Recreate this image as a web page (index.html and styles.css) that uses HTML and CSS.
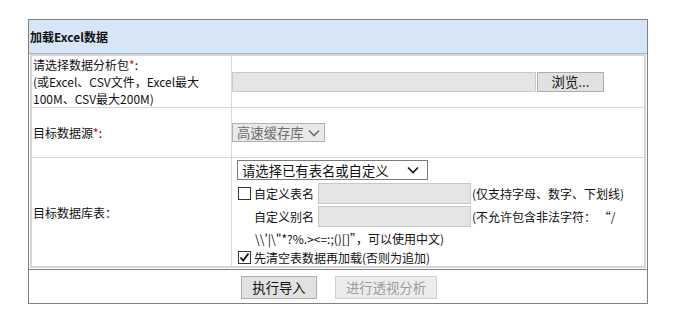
FILE: index.html
```html
<!DOCTYPE html>
<html lang="zh-CN">
<head>
  <meta charset="UTF-8">
  <title>加载Excel数据</title>
  <link rel="stylesheet" href="styles.css">
</head>
<body>
  <div class="panel">
    <div class="panel-title">加载Excel数据</div>

    <div class="form">
      <!-- 数据文件 -->
      <div class="row row-file">
        <div class="label">
          <span>请选择数据分析包<em>*</em>:<br>(或Excel、CSV文件，Excel最大<br>100M、CSV最大200M)</span>
        </div>
        <div class="field">
          <div class="file">
            <span class="file-path"></span>
            <span class="btn btn-browse">浏览...</span>
          </div>
        </div>
      </div>

      <!-- 目标数据源 -->
      <div class="row row-source">
        <div class="label"><span>目标数据源<em>*</em>:</span></div>
        <div class="field">
          <div class="select select-disabled">
            <span>高速缓存库</span>
            <svg width="12" height="8" viewBox="0 0 12 8"><path d="M1 1.5 L6 6.5 L11 1.5" fill="none" stroke="currentColor" stroke-width="1.6"/></svg>
          </div>
        </div>
      </div>

      <!-- 目标数据库表 -->
      <div class="row row-table">
        <div class="label"><span>目标数据库表：</span></div>
        <div class="field field-table">
          <div class="select select-table">
            <span>请选择已有表名或自定义</span>
            <svg width="12" height="8" viewBox="0 0 12 8"><path d="M1 1.5 L6 6.5 L11 1.5" fill="none" stroke="currentColor" stroke-width="1.6"/></svg>
          </div>
          <div class="line line-name">
            <span class="check"></span>
            <span class="caption">自定义表名</span>
            <span class="text-box"></span>
            <span class="hint">(仅支持字母、数字、下划线)</span>
          </div>
          <div class="line line-alias">
            <span class="caption">自定义别名</span>
            <span class="text-box"></span>
            <span class="hint">(不允许包含非法字符：&nbsp;“/</span>
          </div>
          <div class="line line-wrap">\\'|\"*?%.&gt;&lt;=:;()[]”，可以使用中文)</div>
          <div class="line line-clear">
            <span class="check checked">
              <svg width="11" height="11" viewBox="0 0 11 11"><path d="M1.5 5.5 L4.2 8.5 L9.5 1.5" fill="none" stroke="#111" stroke-width="1.8"/></svg>
            </span>
            <span class="caption">先清空表数据再加载(否则为追加)</span>
          </div>
        </div>
      </div>
    </div>

    <div class="actions">
      <span class="btn btn-run">执行导入</span>
      <span class="btn btn-pivot">进行透视分析</span>
    </div>
  </div>
</body>
</html>
```

FILE: styles.css
```css
* {
  margin: 0;
  padding: 0;
  box-sizing: border-box;
}

body {
  font-family: "Noto Sans CJK SC", "Microsoft YaHei", sans-serif;
  font-size: 12px;
  color: #111;
  background: #fff;
}

em {
  font-style: normal;
  color: #e00;
}

/* Panel */
.panel {
  width: 620px;
  margin: 19px 0 0 28px;
  border: 1px solid #808080;
}

.panel-title {
  height: 34px;
  line-height: 33px;
  padding-left: 1px;
  font-weight: bold;
  background: #d7e6f6;
  border-bottom: 1px solid #a9b4bf;
}

/* Form rows */
.form {
  margin: 0 1px 1px;
  border: 2px solid #d6d6d6;
}

.row {
  display: flex;
  border-bottom: 1px solid #d6d6d6;
}

.row:last-child {
  border-bottom: 0;
}

.row-file { height: 52px; }
.row-source { height: 50px; }
.row-table { height: 108px; }

.label {
  width: 200px;
  padding-left: 1px;
  display: flex;
  align-items: center;
  line-height: 17px;
  border-right: 1px solid #d6d6d6;
}

.field {
  flex: 1;
  display: flex;
  flex-direction: column;
  justify-content: center;
}

/* File picker */
.file {
  display: flex;
  height: 20px;
}

.file-path {
  width: 304px;
  background: #e5e5e5;
  border: 1px solid #c8c8c8;
}

.btn {
  display: inline-flex;
  align-items: center;
  justify-content: center;
  font-size: 13.33px;
  background: #e1e1e1;
  border: 1px solid #adadad;
  color: #111;
}

.btn-browse {
  width: 67px;
  margin-left: 1px;
}

/* Selects */
.select {
  display: flex;
  align-items: center;
  justify-content: space-between;
  font-size: 13.33px;
  border: 1px solid #7a7a7a;
  padding: 0 8px 0 4px;
}

.select-disabled {
  width: 93px;
  height: 19px;
  background: #e9e9e9;
  border-color: #b0b0b0;
  color: #6d6d6d;
  padding-right: 4px;
}

.select-table {
  width: 191px;
  height: 20px;
  margin: 2px 0 0 5px;
  background: #fff;
  color: #111;
}

/* Table options */
.field-table {
  justify-content: flex-start;
}

.line {
  display: flex;
  align-items: center;
  margin-left: 6px;
}

.line-name {
  height: 21px;
  margin-top: 3px;
}

.line-alias {
  height: 21px;
  margin-top: 2px;
  padding-left: 16px;
}

.line-wrap {
  height: 22px;
  padding-left: 17px;
}

.line-clear {
  height: 16px;
}

.check {
  width: 13px;
  height: 13px;
  margin-right: 3px;
  border: 1px solid #333;
  background: #fff;
  display: inline-flex;
  align-items: center;
  justify-content: center;
}

.caption {
  white-space: nowrap;
}

.text-box {
  width: 153px;
  height: 21px;
  margin-left: 4px;
  margin-right: 1px;
  background: #e5e5e5;
  border: 1px solid #c8c8c8;
}

.hint {
  white-space: nowrap;
}

/* Actions */
.actions {
  height: 34px;
  border-top: 1px solid #808080;
  display: flex;
  align-items: center;
  justify-content: center;
  gap: 18px;
  padding-top: 1px;
}

.btn-run {
  width: 76px;
  height: 23px;
  margin-left: 2px;
}

.btn-pivot {
  width: 102px;
  height: 23px;
  background: #ececec;
  border-color: #cfcfcf;
  color: #9c9c9c;
}
```
